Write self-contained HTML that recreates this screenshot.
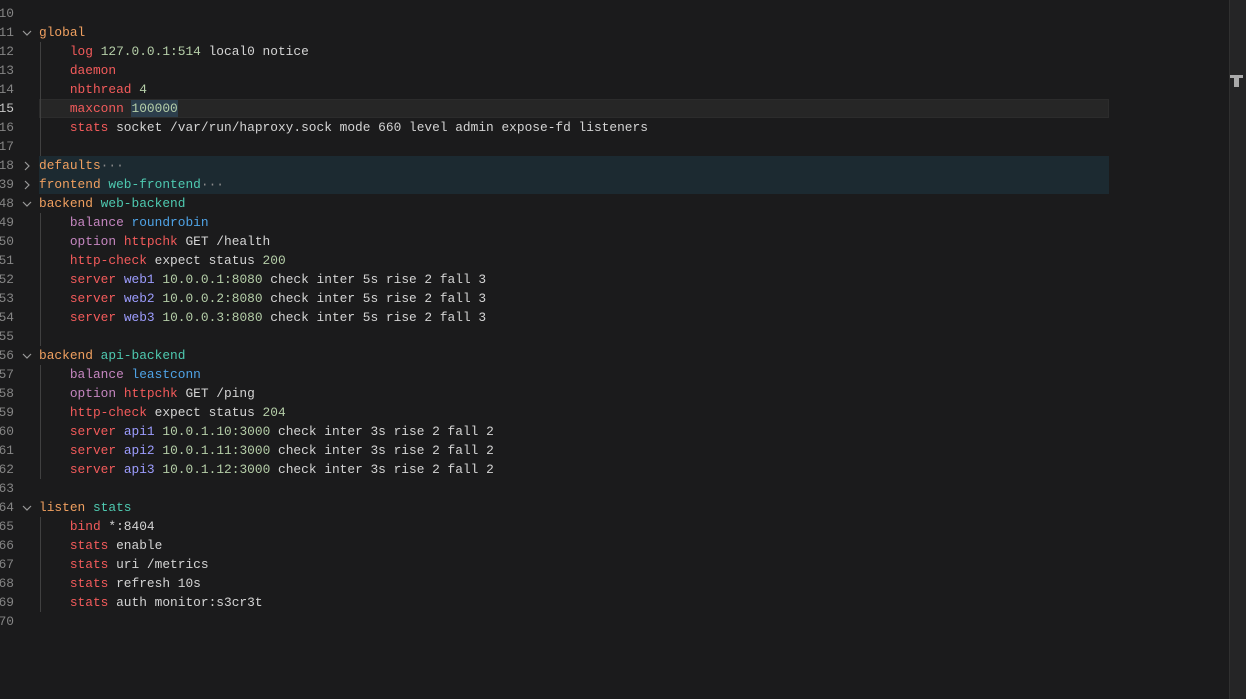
<!DOCTYPE html>
<html><head><style>
body{margin:0;width:1246px;height:699px;background:#1b1b1c;overflow:hidden;position:relative;font-family:"Liberation Mono",monospace;font-size:12.85px;}
.row{position:absolute;left:0;height:19px;line-height:19px;width:1229px;white-space:pre;}
.ln{position:absolute;left:-26px;width:40px;text-align:right;color:#858585;}
.ln.cur{color:#c6c6c6}
.code{position:absolute;left:39px;color:#d4d4d4}
.fold{position:absolute;left:22px;top:5px;width:10px;height:10px}
.k{color:#f0a060}.r{color:#f35b5b}.p{color:#c586c0}.b{color:#4fa3e6}.t{color:#4ec9b0}.n{color:#b5cea8}.s{color:#9d9dff}
.hl{position:absolute;left:39px;width:1070px;height:19px}
.guide{position:absolute;left:40px;width:1px;background:#404040}
.dots{color:#8a8a8a}
</style></head><body>
<svg width="0" height="0" style="position:absolute"><defs>
<symbol id="dn" viewBox="0 0 10 10"><path d="M1 3 L5 7 L9 3" fill="none" stroke="#999" stroke-width="1.2"/></symbol>
<symbol id="rt" viewBox="0 0 10 10"><path d="M3 1 L7 5 L3 9" fill="none" stroke="#999" stroke-width="1.2"/></symbol>
</defs></svg>
<div class="hl" style="top:99px;background:#262626;border:1px solid #2c2c2c;box-sizing:border-box"></div>
<div class="hl" style="top:156px;height:38px;background:#1c2a31"></div>
<div style="position:absolute;left:131px;top:100px;width:47px;height:17px;background:#2c3e4c"></div>
<div class="guide" style="top:42px;height:114px"></div>
<div class="guide" style="top:213px;height:133px"></div>
<div class="guide" style="top:365px;height:114px"></div>
<div class="guide" style="top:517px;height:95px"></div>
<div style="position:absolute;left:1229px;top:0;width:17px;height:699px;background:#252526;border-left:1px solid #303030"></div>
<div style="position:absolute;left:1230px;top:75px;width:13px;height:3px;background:#aaa"></div>
<div style="position:absolute;left:1234px;top:75px;width:5px;height:12px;background:#aaa"></div>

<div class="row" style="top:4px"><span class="ln">10</span></div>
<div class="row" style="top:23px"><span class="ln">11</span><svg class="fold"><use href="#dn"/></svg><span class="code"><span class="k">global</span></span></div>
<div class="row" style="top:42px"><span class="ln">12</span><span class="code">    <span class="r">log</span> <span class="n">127.0.0.1:514</span> local0 notice</span></div>
<div class="row" style="top:61px"><span class="ln">13</span><span class="code">    <span class="r">daemon</span></span></div>
<div class="row" style="top:80px"><span class="ln">14</span><span class="code">    <span class="r">nbthread</span> <span class="n">4</span></span></div>
<div class="row" style="top:99px"><span class="ln cur">15</span><span class="code">    <span class="r">maxconn</span> <span class="n">100000</span></span></div>
<div class="row" style="top:118px"><span class="ln">16</span><span class="code">    <span class="r">stats</span> socket /var/run/haproxy.sock mode 660 level admin expose-fd listeners</span></div>
<div class="row" style="top:137px"><span class="ln">17</span></div>
<div class="row" style="top:156px"><span class="ln">18</span><svg class="fold"><use href="#rt"/></svg><span class="code"><span class="k">defaults</span><span class="dots">···</span></span></div>
<div class="row" style="top:175px"><span class="ln">39</span><svg class="fold"><use href="#rt"/></svg><span class="code"><span class="k">frontend</span> <span class="t">web-frontend</span><span class="dots">···</span></span></div>
<div class="row" style="top:194px"><span class="ln">48</span><svg class="fold"><use href="#dn"/></svg><span class="code"><span class="k">backend</span> <span class="t">web-backend</span></span></div>
<div class="row" style="top:213px"><span class="ln">49</span><span class="code">    <span class="p">balance</span> <span class="b">roundrobin</span></span></div>
<div class="row" style="top:232px"><span class="ln">50</span><span class="code">    <span class="p">option</span> <span class="r">httpchk</span> GET /health</span></div>
<div class="row" style="top:251px"><span class="ln">51</span><span class="code">    <span class="r">http-check</span> expect status <span class="n">200</span></span></div>
<div class="row" style="top:270px"><span class="ln">52</span><span class="code">    <span class="r">server</span> <span class="s">web1</span> <span class="n">10.0.0.1:8080</span> check inter 5s rise 2 fall 3</span></div>
<div class="row" style="top:289px"><span class="ln">53</span><span class="code">    <span class="r">server</span> <span class="s">web2</span> <span class="n">10.0.0.2:8080</span> check inter 5s rise 2 fall 3</span></div>
<div class="row" style="top:308px"><span class="ln">54</span><span class="code">    <span class="r">server</span> <span class="s">web3</span> <span class="n">10.0.0.3:8080</span> check inter 5s rise 2 fall 3</span></div>
<div class="row" style="top:327px"><span class="ln">55</span></div>
<div class="row" style="top:346px"><span class="ln">56</span><svg class="fold"><use href="#dn"/></svg><span class="code"><span class="k">backend</span> <span class="t">api-backend</span></span></div>
<div class="row" style="top:365px"><span class="ln">57</span><span class="code">    <span class="p">balance</span> <span class="b">leastconn</span></span></div>
<div class="row" style="top:384px"><span class="ln">58</span><span class="code">    <span class="p">option</span> <span class="r">httpchk</span> GET /ping</span></div>
<div class="row" style="top:403px"><span class="ln">59</span><span class="code">    <span class="r">http-check</span> expect status <span class="n">204</span></span></div>
<div class="row" style="top:422px"><span class="ln">60</span><span class="code">    <span class="r">server</span> <span class="s">api1</span> <span class="n">10.0.1.10:3000</span> check inter 3s rise 2 fall 2</span></div>
<div class="row" style="top:441px"><span class="ln">61</span><span class="code">    <span class="r">server</span> <span class="s">api2</span> <span class="n">10.0.1.11:3000</span> check inter 3s rise 2 fall 2</span></div>
<div class="row" style="top:460px"><span class="ln">62</span><span class="code">    <span class="r">server</span> <span class="s">api3</span> <span class="n">10.0.1.12:3000</span> check inter 3s rise 2 fall 2</span></div>
<div class="row" style="top:479px"><span class="ln">63</span></div>
<div class="row" style="top:498px"><span class="ln">64</span><svg class="fold"><use href="#dn"/></svg><span class="code"><span class="k">listen</span> <span class="t">stats</span></span></div>
<div class="row" style="top:517px"><span class="ln">65</span><span class="code">    <span class="r">bind</span> *:8404</span></div>
<div class="row" style="top:536px"><span class="ln">66</span><span class="code">    <span class="r">stats</span> enable</span></div>
<div class="row" style="top:555px"><span class="ln">67</span><span class="code">    <span class="r">stats</span> uri /metrics</span></div>
<div class="row" style="top:574px"><span class="ln">68</span><span class="code">    <span class="r">stats</span> refresh 10s</span></div>
<div class="row" style="top:593px"><span class="ln">69</span><span class="code">    <span class="r">stats</span> auth monitor:s3cr3t</span></div>
<div class="row" style="top:612px"><span class="ln">70</span></div>
</body></html>
